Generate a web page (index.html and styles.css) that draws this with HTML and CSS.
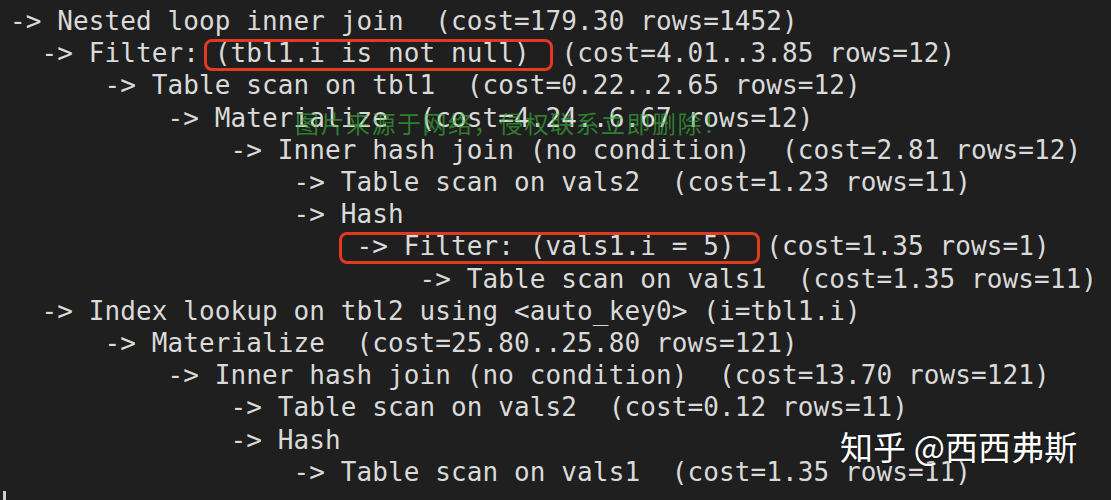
FILE: index.html
```html
<!DOCTYPE html>
<html lang="zh">
<head>
<meta charset="utf-8">
<title>EXPLAIN ANALYZE</title>
<link rel="stylesheet" href="styles.css">
</head>
<body>
<main class="term">
<div class="ln">-&gt; Nested loop inner join  (cost=179.30 rows=1452)</div>
<div class="ln">  -&gt; Filter: <span class="mark mark-a">(tbl1.i is not null)</span>  (cost=4.01..3.85 rows=12)</div>
<div class="ln">      -&gt; Table scan on tbl1  (cost=0.22..2.65 rows=12)</div>
<div class="ln">          -&gt; Materialize  (cost=4.24..6.67 rows=12)</div>
<div class="ln">              -&gt; Inner hash join (no condition)  (cost=2.81 rows=12)</div>
<div class="ln">                  -&gt; Table scan on vals2  (cost=1.23 rows=11)</div>
<div class="ln">                  -&gt; Hash</div>
<div class="ln">                      <span class="mark mark-b">-&gt; Filter: (vals1.i = 5)</span>  (cost=1.35 rows=1)</div>
<div class="ln">                          -&gt; Table scan on vals1  (cost=1.35 rows=11)</div>
<div class="ln">  -&gt; Index lookup on tbl2 using &lt;auto_key0&gt; (i=tbl1.i)</div>
<div class="ln">      -&gt; Materialize  (cost=25.80..25.80 rows=121)</div>
<div class="ln">          -&gt; Inner hash join (no condition)  (cost=13.70 rows=121)</div>
<div class="ln">              -&gt; Table scan on vals2  (cost=0.12 rows=11)</div>
<div class="ln">              -&gt; Hash</div>
<div class="ln">                  -&gt; Table scan on vals1  (cost=1.35 rows=11)</div>
<div class="cursor"></div>
<div class="wm-green">图片来源于网络，侵权联系立即删除！</div>
<div class="wm-zhihu">知乎 @西西弗斯</div>
</main>
</body>
</html>
```
FILE: styles.css
```css
html, body {
  margin: 0;
  padding: 0;
  background: #1f1f1f;
}
body {
  width: 1111px;
  height: 500px;
  overflow: hidden;
}
.term {
  position: relative;
  height: 500px;
  padding: 5px 0 0 10px;
  box-sizing: border-box;
  font-family: "DejaVu Sans Mono", "Liberation Mono", monospace;
  font-size: 26px;
  line-height: 32.2px;
  letter-spacing: 0.1px;
  color: #dadada;
}
.ln {
  white-space: pre;
}
.mark {
  position: relative;
}
.mark::after {
  content: "";
  position: absolute;
  top: 0.5px;
  bottom: -2.5px;
  border: 3.5px solid #e2391f;
  border-radius: 8px;
  pointer-events: none;
}
.mark-a::after {
  left: -11px;
  right: -23px;
}
.mark-b::after {
  left: -18px;
  right: -25px;
}
.cursor {
  margin: 3px 0 0 -7px;
  width: 3px;
  height: 12px;
  background: #cfcfcf;
}
.wm-green {
  position: absolute;
  left: 295px;
  top: 111px;
  font-family: "Noto Sans CJK SC", sans-serif;
  font-size: 24px;
  line-height: 1;
  letter-spacing: 1.5px;
  color: rgba(60, 190, 60, 0.6);
  white-space: nowrap;
}
.wm-zhihu {
  position: absolute;
  left: 840px;
  top: 430px;
  font-family: "Noto Sans CJK SC", sans-serif;
  font-size: 33px;
  line-height: 1;
  color: #ffffff;
  text-shadow: 0 0 2px rgba(0, 0, 0, 0.6);
  white-space: nowrap;
}
```
